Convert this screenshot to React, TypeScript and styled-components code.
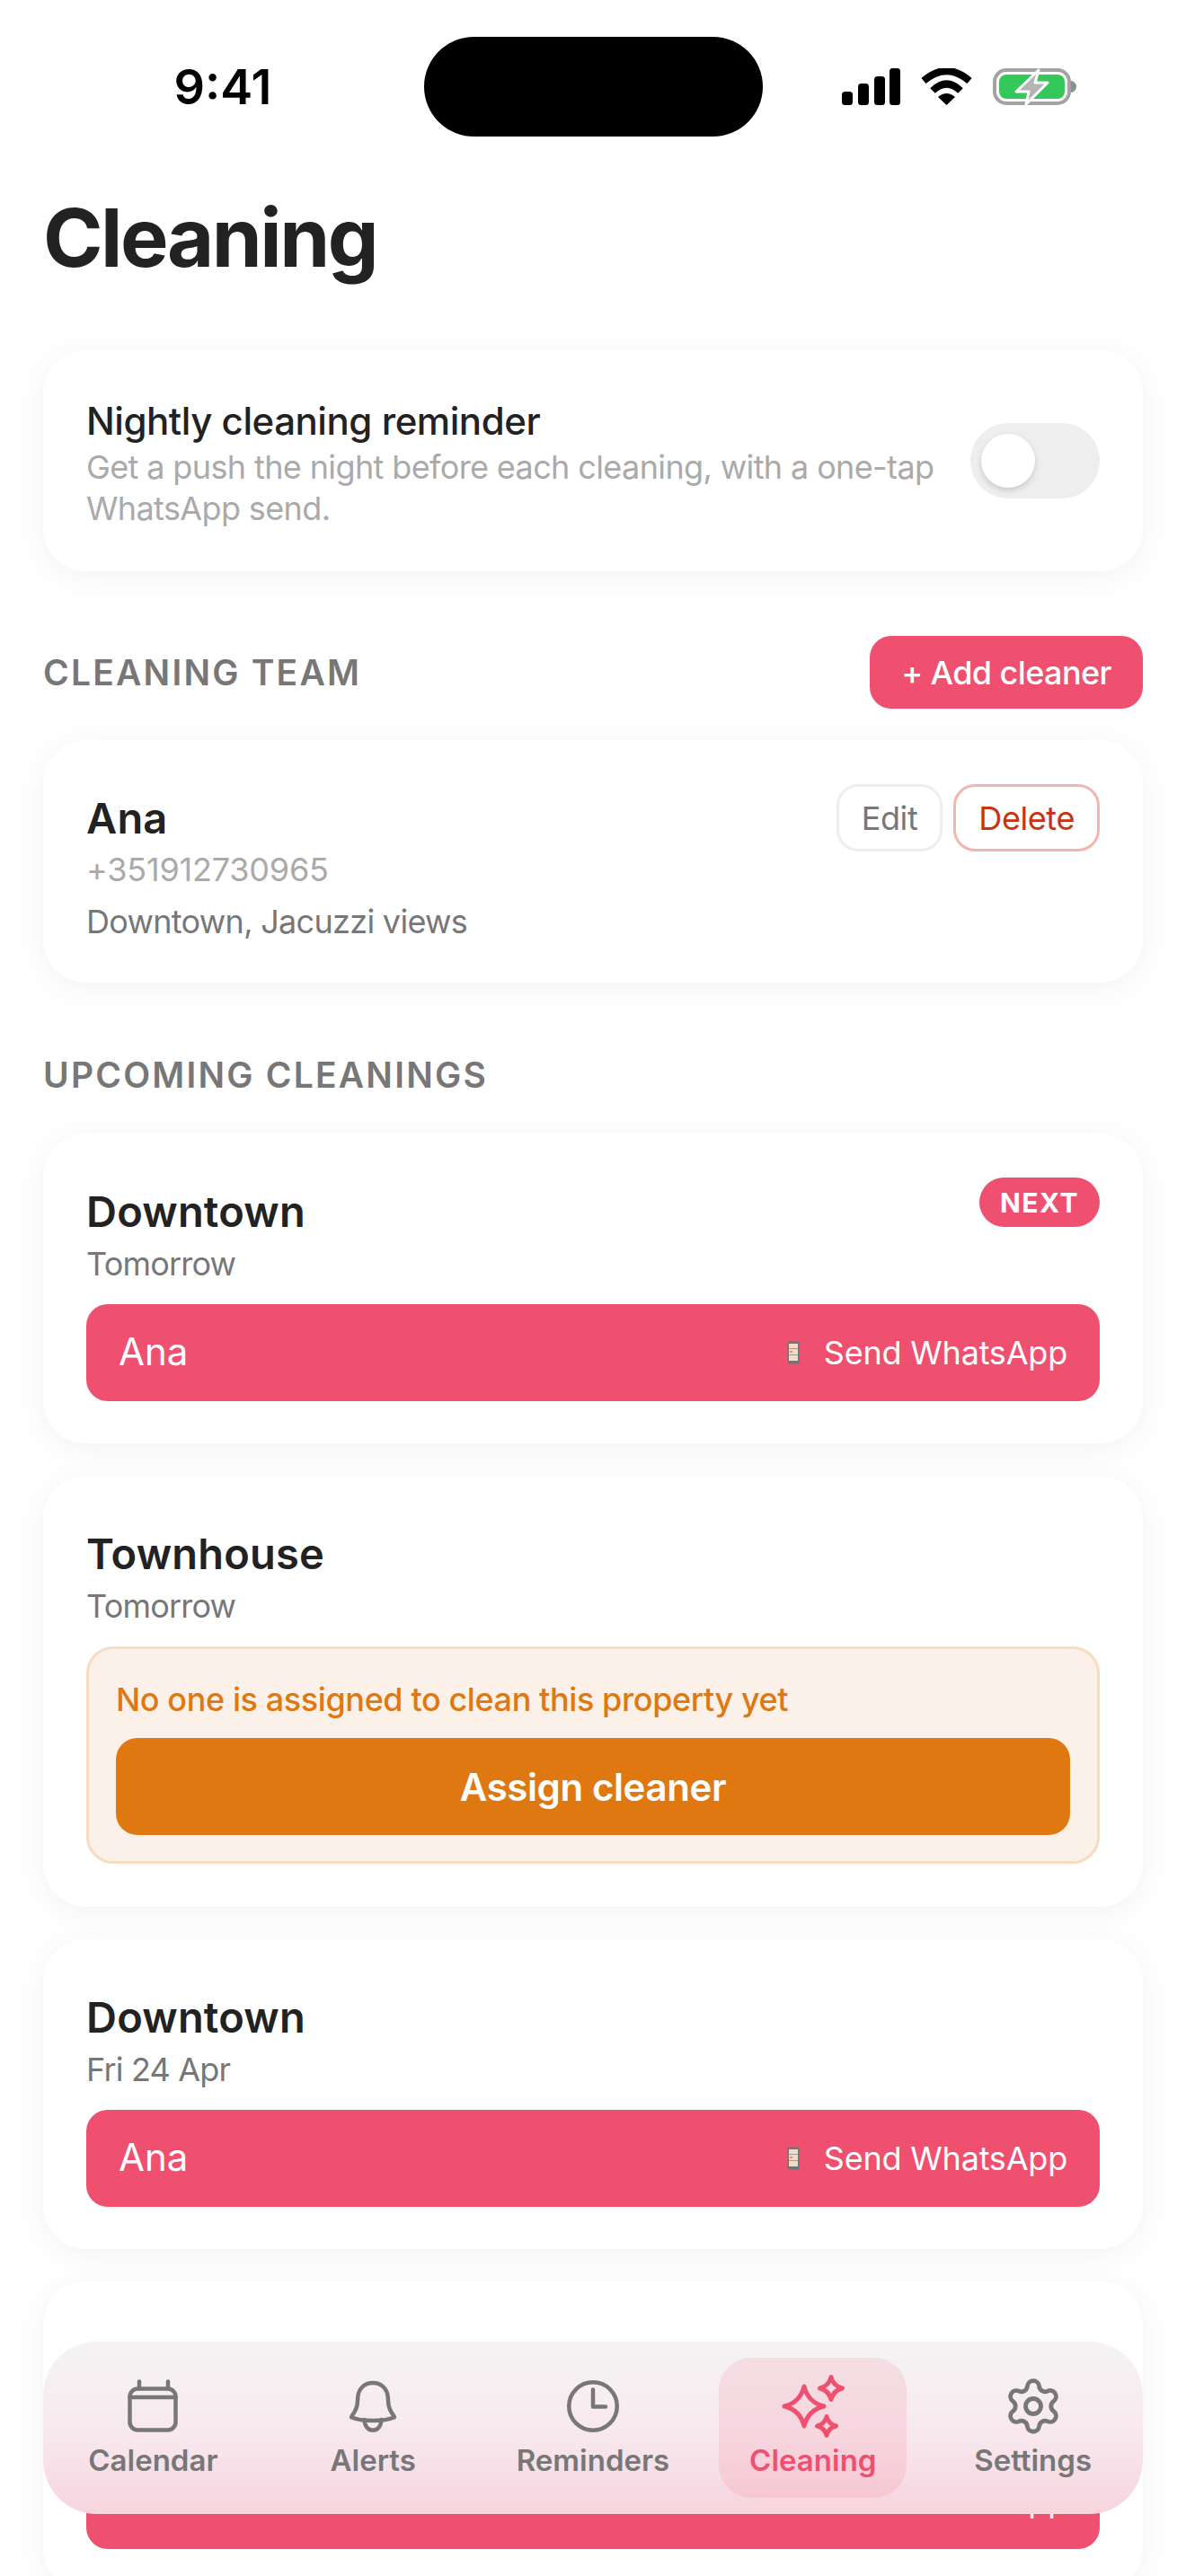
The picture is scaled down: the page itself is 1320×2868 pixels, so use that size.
import { FC, ReactNode } from 'react';
import styled, { createGlobalStyle } from 'styled-components';
import { Settings } from 'lucide-react';

const PINK = '#ef5070';
const ORANGE = '#e07812';
const GREY = '#777777';

const GlobalStyle = createGlobalStyle`
  * {
    box-sizing: border-box;
  }
  html, body {
    margin: 0;
    padding: 0;
    background: #ffffff;
  }
  body {
    font-family: Inter, "Liberation Sans", sans-serif;
    color: #222222;
  }
  button {
    font-family: inherit;
  }
`;

const Screen = styled.div`
  position: relative;
  width: 1320px;
  height: 2868px;
  overflow: hidden;
  background: #ffffff;
`;

const StatusBar = styled.div`
  display: grid;
  grid-template-columns: 472px 377px 1fr;
  padding-top: 41px;
  height: 152px;
`;

const Clock = styled.div`
  display: flex;
  align-items: center;
  justify-content: center;
  padding-left: 24px;
  height: 111px;
  font-size: 54px;
  font-weight: 600;
  color: #000000;
`;

const Island = styled.div`
  height: 111px;
  border-radius: 56px;
  background: #000000;
`;

const StatusIcons = styled.div`
  display: flex;
  align-items: center;
  gap: 23px;
  height: 111px;
  padding-left: 88px;
`;

const Main = styled.main`
  padding: 0 48px;
`;

const Title = styled.h1`
  margin: 59px 0 70px;
  font-size: 90px;
  line-height: 108px;
  font-weight: 700;
  letter-spacing: -2.5px;
  color: #222222;
`;

const Card = styled.section`
  padding: 48px;
  border-radius: 48px;
  background: #ffffff;
  box-shadow: 0 6px 36px rgba(0, 0, 0, 0.055);
`;

const ReminderCard = styled(Card)`
  display: flex;
  align-items: center;
  justify-content: space-between;
  height: 247px;
  padding-right: 48px;
`;

const ReminderCopy = styled.div`
  padding-top: 5px;
`;

const ReminderTitle = styled.div`
  margin-bottom: 1px;
  font-size: 42px;
  line-height: 54px;
  font-weight: 500;
  letter-spacing: -0.45px;
  color: #222222;
`;

const ReminderText = styled.div`
  font-size: 36px;
  line-height: 46px;
  letter-spacing: -0.62px;
  color: #aaaaaa;
`;

const Toggle = styled.div`
  flex: none;
  display: flex;
  align-items: center;
  width: 144px;
  height: 84px;
  padding-left: 12px;
  border-radius: 42px;
  background: #eeeeee;
`;

const Knob = styled.div`
  width: 60px;
  height: 60px;
  border-radius: 50%;
  background: #ffffff;
  box-shadow: 0 3px 6px rgba(0, 0, 0, 0.16);
`;

const SectionHead = styled.div`
  display: flex;
  align-items: center;
  justify-content: space-between;
  height: 81px;
  margin: 72px 0 35px;
`;

const UpcomingHead = styled(SectionHead)`
  margin: 63px 0 27px;
  height: 78px;
`;

const SectionLabel = styled.h2`
  margin: 0;
  font-size: 39px;
  font-weight: 600;
  letter-spacing: 2.2px;
  color: ${GREY};
`;

const AddButton = styled.button`
  width: 304px;
  height: 81px;
  padding: 0;
  border: none;
  border-radius: 24px;
  background: ${PINK};
  color: #ffffff;
  font-size: 36px;
  font-weight: 500;
  letter-spacing: -0.6px;
`;

const CleanerCard = styled(Card)`
  display: flex;
  justify-content: space-between;
  height: 270px;
`;

const PropertyName = styled.div`
  margin-top: 2px;
  font-size: 47px;
  line-height: 74px;
  font-weight: 600;
  letter-spacing: 0.2px;
  color: #222222;
`;

const CleanerLine = styled.div<{ $muted?: boolean }>`
  margin-top: ${(p) => (p.$muted ? -8 : 2)}px;
  font-size: 36px;
  line-height: 56px;
  letter-spacing: ${(p) => (p.$muted ? -0.2 : -0.7)}px;
  color: ${(p) => (p.$muted ? '#aaaaaa' : GREY)};
`;

const CleanerActions = styled.div`
  display: flex;
  gap: 12px;
  margin-top: 1px;
`;

const ActionButton = styled.button<{ $danger?: boolean }>`
  height: 75px;
  padding: 0 25px;
  border: 3px solid ${(p) => (p.$danger ? '#f2b6b0' : '#eeeeee')};
  border-radius: 24px;
  background: #ffffff;
  color: ${(p) => (p.$danger ? '#c8320e' : GREY)};
  font-size: 36px;
  letter-spacing: -0.4px;
`;

const CleaningList = styled.div`
  display: flex;
  flex-direction: column;
  gap: 36px;
`;

const CleaningHead = styled.div`
  display: flex;
  align-items: flex-start;
  justify-content: space-between;
`;

const CleaningDate = styled.div`
  font-size: 36px;
  line-height: 42px;
  letter-spacing: -0.8px;
  color: ${GREY};
`;

const NextBadge = styled.span`
  display: flex;
  align-items: center;
  height: 55px;
  margin-top: 1px;
  padding: 0 23px;
  border-radius: 28px;
  background: ${PINK};
  color: #ffffff;
  font-size: 30px;
  font-weight: 700;
  letter-spacing: 1.5px;
`;

const SendButton = styled.button`
  display: flex;
  align-items: center;
  justify-content: space-between;
  width: 100%;
  height: 108px;
  margin: 24px 0 -1px;
  padding: 0 36px;
  border: none;
  border-radius: 24px;
  background: ${PINK};
  color: #ffffff;
`;

const SendName = styled.span`
  padding-bottom: 4px;
  font-size: 42px;
`;

const SendAction = styled.span`
  display: flex;
  align-items: center;
  gap: 27px;
  font-size: 36px;
  letter-spacing: -0.2px;
`;

const WarningBox = styled.div`
  margin-top: 24px;
  padding: 33px 30px 29px;
  border: 3px solid #f6dcc1;
  border-radius: 30px;
  background: #fcf1e8;
`;

const WarningText = styled.div`
  font-size: 36px;
  line-height: 46px;
  font-weight: 500;
  letter-spacing: -0.4px;
  color: ${ORANGE};
`;

const AssignButton = styled.button`
  display: block;
  width: 100%;
  height: 108px;
  margin-top: 20px;
  border: none;
  border-radius: 24px;
  background: ${ORANGE};
  color: #ffffff;
  font-size: 42px;
  font-weight: 600;
  letter-spacing: -0.4px;
`;

/* frosted bar: the blur of the pink button behind it is baked into the gradient */
const TabBar = styled.nav`
  position: absolute;
  left: 48px;
  top: 2607px;
  display: grid;
  grid-template-columns: repeat(5, 1fr);
  gap: 36px;
  width: 1224px;
  height: 192px;
  padding: 18px;
  border-radius: 60px;
  background: linear-gradient(180deg, #f4f3f4 0%, #f6eff2 25%, #f8e8ee 55%, #f7dde5 80%, #f6d4de 100%);
`;

const Tab = styled.div<{ $active?: boolean }>`
  display: flex;
  flex-direction: column;
  align-items: center;
  gap: 8px;
  padding-top: 24px;
  border-radius: 36px;
  background: ${(p) => (p.$active ? 'rgba(239, 80, 112, 0.12)' : 'transparent')};
  color: ${(p) => (p.$active ? PINK : GREY)};
`;

const TabIcon = styled.div`
  display: flex;
  align-items: center;
  justify-content: center;
  width: 60px;
  height: 60px;
  flex: none;
  svg {
    flex: none;
    overflow: visible;
  }
`;

const TabLabel = styled.span`
  font-size: 33px;
  line-height: 44px;
  font-weight: 600;
`;

const SignalIcon = () => (
  <svg width="65" height="41" viewBox="0 0 65 41" fill="#000">
    <rect x="0" y="26" width="12" height="15" rx="3.5" />
    <rect x="18" y="17" width="12" height="24" rx="3.5" />
    <rect x="36" y="9" width="12" height="32" rx="3.5" />
    <rect x="53" y="0" width="12" height="41" rx="3.5" />
  </svg>
);

const WifiIcon = () => (
  <svg width="57" height="41" viewBox="0 0 57 41">
    <path d="M3 14Q28.5 -8 54 14" fill="none" stroke="#000" strokeWidth="8" />
    <path d="M13 25Q28.5 10 44 25" fill="none" stroke="#000" strokeWidth="8" />
    <path d="M19 32Q28.5 24 38 32L28.5 41Z" fill="#000" />
  </svg>
);

const BatteryIcon = () => (
  <svg width="93" height="43" viewBox="0 0 93 43">
    <rect x="2" y="3" width="83" height="37" rx="13" fill="none" stroke="#a3a3a3" strokeWidth="4" />
    <rect x="7" y="8" width="73" height="27" rx="8" fill="#34c759" />
    <path d="M87 15c3 0 6 3 6 6.500s-3 6.500-6 6.500z" fill="#8e8e8e" />
    <path d="M51 3L26 27H40L37 41L61 17H47Z" fill="#b4b4b4" stroke="#fff" strokeWidth="3" strokeLinejoin="round" />
  </svg>
);

const PhoneIcon = () => (
  <svg width="14" height="26" viewBox="0 0 14 26">
    <rect x="0.500" y="0.500" width="13" height="25" rx="2" fill="#6f7478" />
    <rect x="2" y="3" width="10" height="19" fill="#f3dcc4" />
    <rect x="2" y="8" width="10" height="1" fill="#9a9a9a" />
    <rect x="2" y="15" width="10" height="1" fill="#9a9a9a" />
    <rect x="3" y="11" width="3" height="2" fill="#ef7f8a" />
  </svg>
);

const lineProps = {
  fill: 'none',
  stroke: 'currentColor',
  strokeWidth: 1.8,
  strokeLinecap: 'round' as const,
  strokeLinejoin: 'round' as const,
};

const CalendarIcon = () => (
  <svg width="60" height="60" viewBox="0 0 24 24" {...lineProps}>
    <rect x="1.800" y="4.200" width="20.400" height="18.400" rx="3.500" />
    <path d="M1.800 8H22.200M6 1V4.200M18.800 1V4.200" />
  </svg>
);

const BellIcon = () => (
  <svg width="60" height="60" viewBox="0 0 24 24" {...lineProps}>
    <path d="M12 1.600C8 1.600 5.500 4.500 5.300 8C5.100 11.500 5 12.500 3.800 14.600C3.200 15.600 2.400 16.400 2.400 16.900C5 18 9 18.400 12 18.400C15 18.400 19 18 21.600 16.900C21.600 16.400 20.800 15.600 20.200 14.600C19 12.500 18.900 11.500 18.700 8C18.500 4.500 16 1.600 12 1.600Z" />
    <path d="M8.200 18C8.400 21 10 22.700 12 22.700C14 22.700 15.600 21 15.800 18" />
  </svg>
);

const ClockIcon = () => (
  <svg width="60" height="60" viewBox="0 0 24 24" {...lineProps}>
    <circle cx="12" cy="12" r="10.700" />
    <path d="M12 4.600V12.200H17.600" />
  </svg>
);

const star = (cx: number, cy: number, r: number) => {
  const k = r * 0.2;
  return (
    `M${cx} ${cy - r}Q${cx + k} ${cy - k} ${cx + r} ${cy}` +
    `Q${cx + k} ${cy + k} ${cx} ${cy + r}` +
    `Q${cx - k} ${cy + k} ${cx - r} ${cy}` +
    `Q${cx - k} ${cy - k} ${cx} ${cy - r}Z`
  );
};

const SparkleIcon = () => (
  <svg width="60" height="60" viewBox="0 0 24 24" {...lineProps} strokeWidth={2}>
    <path d={star(8, 12, 8.800)} />
    <path d={star(20, 4, 5)} />
    <path d={star(18, 20.800, 4.200)} />
  </svg>
);

const SendRow: FC<{ name: string }> = ({ name }) => (
  <SendButton>
    <SendName>{name}</SendName>
    <SendAction>
      <PhoneIcon />
      Send WhatsApp
    </SendAction>
  </SendButton>
);

interface CleaningProps {
  property: string;
  date: string;
  next?: boolean;
  children: ReactNode;
}

const Cleaning: FC<CleaningProps> = ({ property, date, next, children }) => (
  <Card>
    <CleaningHead>
      <div>
        <PropertyName>{property}</PropertyName>
        <CleaningDate>{date}</CleaningDate>
      </div>
      {next && <NextBadge>NEXT</NextBadge>}
    </CleaningHead>
    {children}
  </Card>
);

const tabs = [
  { label: 'Calendar', icon: <CalendarIcon /> },
  { label: 'Alerts', icon: <BellIcon /> },
  { label: 'Reminders', icon: <ClockIcon /> },
  { label: 'Cleaning', icon: <SparkleIcon />, active: true },
  { label: 'Settings', icon: <Settings size={68} strokeWidth={1.7} /> },
];

const App: FC = () => (
  <Screen>
    <GlobalStyle />
    <StatusBar>
      <Clock>9:41</Clock>
      <Island />
      <StatusIcons>
        <SignalIcon />
        <WifiIcon />
        <BatteryIcon />
      </StatusIcons>
    </StatusBar>
    <Main>
      <Title>Cleaning</Title>
      <ReminderCard>
        <ReminderCopy>
          <ReminderTitle>Nightly cleaning reminder</ReminderTitle>
          <ReminderText>
            Get a push the night before each cleaning, with a one-tap
            <br />
            WhatsApp send.
          </ReminderText>
        </ReminderCopy>
        <Toggle>
          <Knob />
        </Toggle>
      </ReminderCard>

      <SectionHead>
        <SectionLabel>CLEANING TEAM</SectionLabel>
        <AddButton>+ Add cleaner</AddButton>
      </SectionHead>
      <CleanerCard>
        <div>
          <PropertyName>Ana</PropertyName>
          <CleanerLine $muted>+351912730965</CleanerLine>
          <CleanerLine>Downtown, Jacuzzi views</CleanerLine>
        </div>
        <CleanerActions>
          <ActionButton>Edit</ActionButton>
          <ActionButton $danger>Delete</ActionButton>
        </CleanerActions>
      </CleanerCard>

      <UpcomingHead>
        <SectionLabel>UPCOMING CLEANINGS</SectionLabel>
      </UpcomingHead>
      <CleaningList>
        <Cleaning property="Downtown" date="Tomorrow" next>
          <SendRow name="Ana" />
        </Cleaning>
        <Cleaning property="Townhouse" date="Tomorrow">
          <WarningBox>
            <WarningText>No one is assigned to clean this property yet</WarningText>
            <AssignButton>Assign cleaner</AssignButton>
          </WarningBox>
        </Cleaning>
        <Cleaning property="Downtown" date="Fri 24 Apr">
          <SendRow name="Ana" />
        </Cleaning>
        <Cleaning property="Downtown" date="Sat 25 Apr">
          <SendRow name="Ana" />
        </Cleaning>
      </CleaningList>
    </Main>
    <TabBar>
      {tabs.map((tab) => (
        <Tab key={tab.label} $active={tab.active}>
          <TabIcon>{tab.icon}</TabIcon>
          <TabLabel>{tab.label}</TabLabel>
        </Tab>
      ))}
    </TabBar>
  </Screen>
);

export default App;
